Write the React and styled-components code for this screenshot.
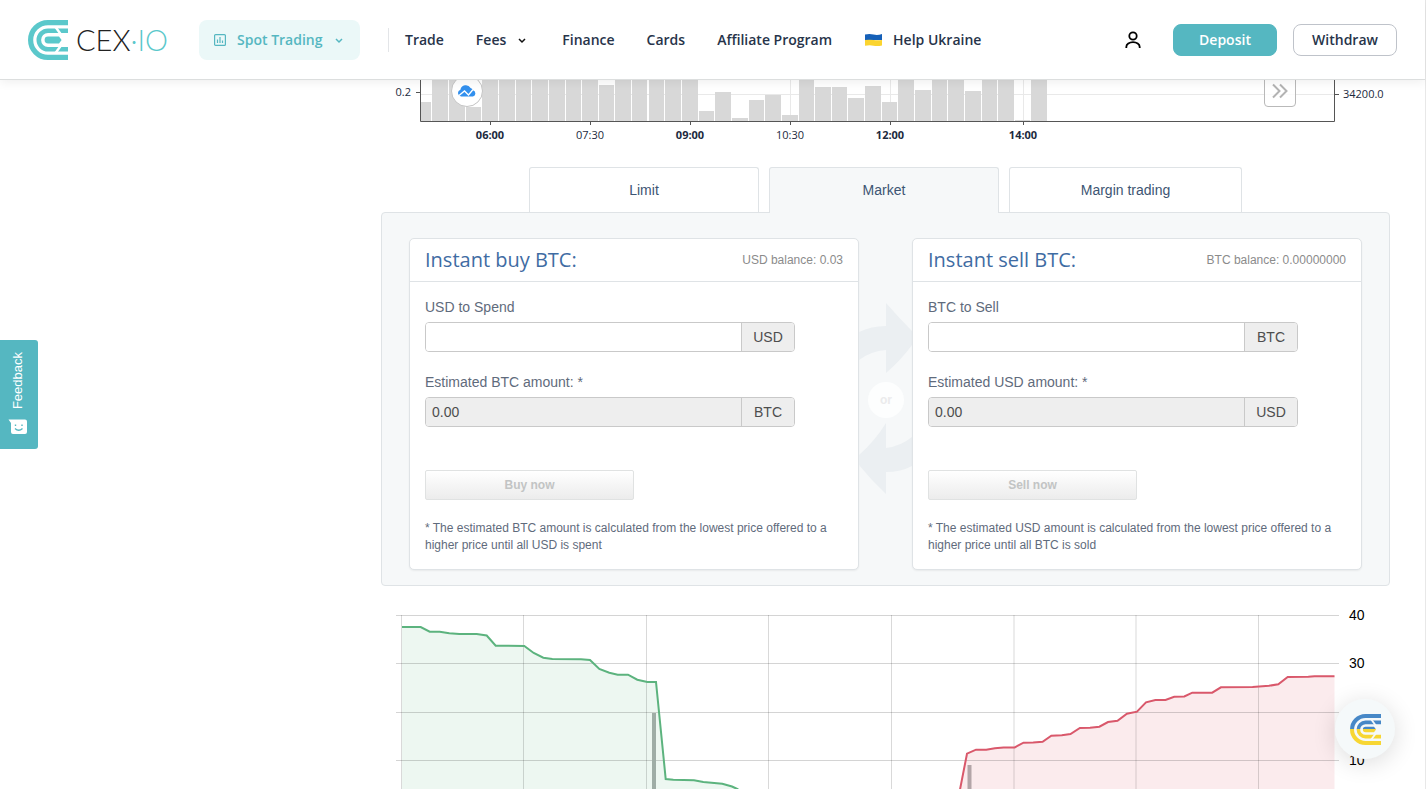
import React from "react";
import styled, { createGlobalStyle } from "styled-components";

const GlobalStyle = createGlobalStyle`
  *, *::before, *::after { box-sizing: border-box; }
  body {
    margin: 0;
    background: #fff;
    color: #5f6b7c;
    font-family: "Liberation Sans", Helvetica, Arial, sans-serif;
    font-size: 14px;
  }
  a { color: inherit; text-decoration: none; }
  button, input { font: inherit; margin: 0; }
`;

const Page = styled.div`
  border-right: 1px solid #e8e8e8;
`;

/* ---------- header ---------- */

const Header = styled.header`
  position: sticky;
  top: 0;
  z-index: 5;
  display: flex;
  align-items: center;
  height: 80px;
  padding: 0 28px;
  background: #fff;
  border-bottom: 1px solid #dcdede;
  box-shadow: 0 2px 10px rgba(0, 0, 0, 0.07);
  font: 600 14px/20px "Open Sans", "Noto Sans", sans-serif;
  color: #27344a;
`;

const Logo = styled.a`
  display: flex;
  align-items: center;
  width: 140px;
  margin-right: 31px;

  svg { flex: none; }
`;

const Wordmark = styled.svg`
  margin-left: 8px;
`;

const ProductButton = styled.button`
  display: flex;
  align-items: center;
  width: 161px;
  height: 40px;
  padding: 0 13px 0 14px;
  border: 0;
  border-radius: 8px;
  background: #ebf8f8;
  color: #55b7c1;
  cursor: pointer;

  span { margin: 0 auto 0 10px; }
`;

const Nav = styled.nav`
  display: flex;
  align-items: center;
  gap: 32px;
  margin-left: 28px;
  white-space: nowrap;
`;

const Divider = styled.span`
  width: 1px;
  height: 24px;
  margin-right: -16px;
  background: #e3e5e8;
`;

const NavLink = styled.a`
  display: flex;
  align-items: center;
  gap: ${(p) => p.$gap || 8}px;
`;

const Actions = styled.div`
  display: flex;
  align-items: center;
  gap: 16px;
  margin-left: auto;
`;

const IconButton = styled.button`
  display: grid;
  place-items: center;
  width: 24px;
  height: 24px;
  margin-right: 12px;
  padding: 0;
  border: 0;
  background: none;
`;

const ActionButton = styled.button`
  width: 104px;
  height: 32px;
  padding: 0;
  border: 1px solid ${(p) => (p.$primary ? "#55b7c1" : "#bfc3ca")};
  border-radius: 8px;
  background: ${(p) => (p.$primary ? "#55b7c1" : "#fff")};
  color: ${(p) => (p.$primary ? "#fff" : "#27344a")};
  cursor: pointer;
`;

/* ---------- body ---------- */

const Body = styled.div`
  display: grid;
  grid-template-columns: 381px minmax(0, 1fr);
  padding-right: 35px;
`;

const Main = styled.main`
  grid-column: 2;
`;

const ChartBox = styled.section`
  position: relative;
  overflow: hidden;
`;

const ChartSvg = styled.svg`
  display: block;
  width: 100%;
  font-family: ${(p) => p.$font};
  font-size: ${(p) => p.$size}px;
`;

const ChartBadge = styled.a`
  position: absolute;
  top: -5px;
  left: 70px;
  display: grid;
  place-items: center;
  width: 32px;
  height: 32px;
  border: 1px solid #c4c4c4;
  border-radius: 50%;
  background: #fff;
`;

const ScrollButton = styled.button`
  position: absolute;
  top: -5px;
  right: 94px;
  display: grid;
  place-items: center;
  width: 32px;
  height: 32px;
  padding: 0;
  border: 1px solid #b9b9b9;
  border-radius: 4px;
  background: rgba(255, 255, 255, 0.8);
`;

const Tabs = styled.div`
  display: flex;
  justify-content: center;
  gap: 10px;
`;

const Tab = styled.button`
  width: ${(p) => p.$width || 230}px;
  height: ${(p) => (p.$active ? 46 : 45)}px;
  margin-bottom: ${(p) => (p.$active ? -1 : 0)}px;
  padding: 0 0 ${(p) => (p.$active ? 1 : 0)}px;
  border: 1px solid #dfe3e6;
  border-bottom: 0;
  border-radius: 3px 3px 0 0;
  background: ${(p) => (p.$active ? "#f6f8f9" : "#fff")};
  color: #3d5573;
  position: relative;
  cursor: pointer;
`;

const Panel = styled.section`
  display: flex;
  padding: 25px 27px 15px;
  border: 1px solid #dfe3e6;
  border-radius: 4px;
  background: #f6f8f9;
`;

const Card = styled.form`
  flex: 1;
  border: 1px solid #dfe3e6;
  border-radius: 5px;
  background: #fff;
  box-shadow: 0 1px 2px rgba(0, 0, 0, 0.06);
`;

const CardHead = styled.header`
  display: flex;
  align-items: center;
  justify-content: space-between;
  height: 43px;
  padding: 0 15px;
  border-bottom: 1px solid #dfe3e6;
`;

const CardTitle = styled.h2`
  margin: 0;
  font: 400 20px/28px "Open Sans", "Noto Sans", sans-serif;
  color: #3f6ca3;
`;

const Balance = styled.span`
  font-size: 12px;
  color: #8b8b8b;
`;

const CardBody = styled.div`
  padding: 15px;
`;

const Field = styled.div`
  margin-bottom: 20px;

  label {
    display: block;
    margin-bottom: 5px;
    line-height: 20px;
  }
`;

const InputGroup = styled.div`
  display: flex;
  width: 370px;
  max-width: 100%;
  height: 30px;
  border: 1px solid #c9c9c9;
  border-radius: 4px;
  overflow: hidden;
  color: #4d4d4d;
`;

const Input = styled.input`
  flex: 1;
  min-width: 0;
  padding: 0 6px;
  border: 0;
  background: ${(p) => (p.readOnly ? "#eee" : "#fff")};
  color: inherit;
`;

const Unit = styled.span`
  width: 53px;
  border-left: 1px solid #c9c9c9;
  background: #eee;
  line-height: 28px;
  text-align: center;
`;

const SubmitButton = styled.button`
  display: block;
  width: 209px;
  height: 30px;
  margin-top: 43px;
  padding: 0;
  border: 1px solid #e0e2e2;
  border-radius: 2px;
  background: linear-gradient(#fff, #ececec);
  color: #c2c4c4;
  font-size: 12px;
  font-weight: 700;
`;

const Note = styled.p`
  margin: 20px 0 0;
  font-size: 12px;
  line-height: 17px;
`;

const Between = styled.svg`
  flex: none;
  width: 53px;
  height: 332px;
`;

/* ---------- floating widgets ---------- */

const Feedback = styled.button`
  position: fixed;
  left: 0;
  top: 340px;
  z-index: 6;
  display: flex;
  flex-direction: column;
  align-items: center;
  justify-content: space-between;
  width: 38px;
  height: 109px;
  padding: 12px 3px 14px 0;
  border: 0;
  border-radius: 0 3px 3px 0;
  background: #55b7c1;
  color: #fff;
  font-size: 13px;
  line-height: 16px;

  span { writing-mode: vertical-rl; transform: rotate(180deg); }
`;

const ChatButton = styled.button`
  position: fixed;
  right: 31px;
  bottom: 30px;
  z-index: 6;
  display: grid;
  place-items: center;
  width: 60px;
  height: 60px;
  padding: 0;
  border: 0;
  border-radius: 50%;
  background: #f5f9fa;
  box-shadow: 0 4px 24px rgba(0, 0, 0, 0.14);
`;

/* ---------- drawings ---------- */

const Chevron = ({ color }) => (
  <svg width="16" height="16" viewBox="0 0 16 16" fill="none" stroke={color} strokeWidth="1.5">
    <path d="M5 7l3 3 3-3" />
  </svg>
);

const Mark = ({ size, paint, back }) => (
  <svg width={size} height={size} viewBox="0 0 40 40" fill="none" aria-hidden="true">
    <defs>
      <linearGradient id="duo" gradientUnits="userSpaceOnUse" x1="0" y1="0" x2="0" y2="40">
        <stop offset="0.5" stopColor="#4788c7" />
        <stop offset="0.5" stopColor="#f7d633" />
      </linearGradient>
    </defs>
    <path d="M40 2.6H20a17.4 17.4 0 0 0 0 34.800h20" stroke={paint} strokeWidth="5.200" />
    <path d="M40 10.800H20a9.200 9.200 0 0 0 0 18.400h20" stroke={paint} strokeWidth="4.600" />
    <path d="M31 16.600H20a3.400 3.400 0 0 0 0 6.800h11l2.600-3.400z" fill={paint} />
    <path d="M27.500 7l9.500 13-9.500 13" stroke={back} strokeWidth="2.400" />
  </svg>
);

const Flag = () => (
  <svg width="19" height="14" viewBox="0 0 19 14">
    <path d="M1 1.500q4.500-1 8.500 0t8.500-.5V7H1z" fill="#1560b8" />
    <path d="M1 7q4.500-.6 8.500 0t8.500 0v5.500q-4.500 1-8.500.2T1 12.800z" fill="#fbd42f" />
  </svg>
);

const BARS = [
  [421, 10, 102], [432, 16, 70], [449, 16, 70], [466, 15, 107], [482, 16, 70], [499, 16, 70],
  [516, 15, 70], [532, 16, 70], [549, 16, 70], [566, 15, 70], [582, 16, 70], [599, 15, 85],
  [615, 16, 70], [632, 15, 70], [649, 15, 70], [665, 16, 70], [682, 16, 70], [699, 15, 111],
  [715, 16, 92], [732, 16, 118], [749, 15, 100], [765, 16, 95], [782, 16, 115], [799, 15, 70],
  [815, 16, 87], [832, 15, 87], [848, 16, 98], [865, 16, 86], [882, 15, 102], [898, 16, 70],
  [915, 16, 90], [932, 15, 70], [948, 16, 70], [965, 16, 91], [982, 15, 70], [998, 16, 70],
  [1015, 15, 120], [1031, 16, 70],
];

const TIMES = [
  [490, "06:00", 700], [590, "07:30", 400], [690, "09:00", 700],
  [790, "10:30", 400], [890, "12:00", 700], [1023, "14:00", 700],
];

const BIDS =
  "402,627 420.7,627 429.7,631.7 439.7,631.7 449.3,633.2 459.3,634 476.7,634 486.7,635.5 495.7,645.7 524.3,646 533.7,653 543.3,657.7 552.3,658.9 581,659.2 590,660 599.3,669 609.3,672.7 617.7,674.7 628,674.7 637.3,679.7 647.3,682 656,682 665.7,779 673.3,779.8 694,780.3 703.3,782 722.3,783.7 732,786.5 738.3,789.5";

const ASKS =
  "960,789.5 967,753.7 976,749.7 986.2,749.7 994.9,748.2 1003.6,747.4 1014.7,747.4 1023.5,742.7 1033.2,742.5 1042.6,741.7 1051.3,735.7 1061.8,735.2 1070.5,734 1079.9,728 1090,727.7 1099.4,726.7 1108,722 1117.5,720.7 1126.9,713.7 1137,711.7 1146,702.3 1155.4,700 1165.5,700 1174.2,696.8 1184.3,696.5 1192.3,692.7 1212.2,692.7 1220.9,687.3 1252.6,687 1269,685.8 1278.3,684.2 1287.7,677 1308.3,676.8 1314.5,676.3 1334.5,676.3";

const PriceChart = () => (
  <ChartBox>
    <ChartSvg viewBox="381 80 1009 87" $font='"Open Sans", "Noto Sans", sans-serif' $size={11}>
      <path d="M421 94.500H1334M490.500 80V121M590.500 80V121M690.500 80V121M790.500 80V121M890.500 80V121M1023.500 80V121" stroke="#e9e9e9" />
      {BARS.map(([x, w, y]) => (
        <rect key={x} x={x} y={y} width={w} height={121 - y} fill="#d8d8d8" />
      ))}
      <path d="M420.500 80V121.500H1334.500V80M416 92.500h4M1335 94.500h4" fill="none" stroke="#555" />
      {TIMES.map(([x]) => (
        <path key={x} d={`M${x + 0.5} 122v3`} stroke="#555" />
      ))}
      <g fill="#1c2a40">
        {TIMES.map(([x, t, w]) => (
          <text key={t} x={x} y="139" textAnchor="middle" fontWeight={w}>{t}</text>
        ))}
        <text x="411" y="96" textAnchor="end">0.2</text>
        <text x="1343" y="98">34200.0</text>
      </g>
    </ChartSvg>
    <ChartBadge href="#" aria-label="Charts">
      <svg width="20" height="12" viewBox="0 0 20 12">
        <path d="M4 11.500a3.500 3.500 0 0 1-.6-6.800A5.500 5.500 0 0 1 13.600 3a4.300 4.300 0 0 1 2.800 2.600A3.100 3.100 0 0 1 16 11.500z" fill="#3290ee" />
        <path d="M2 10.500l5.500-4.500 4 4L16 4.500" fill="none" stroke="#fff" strokeWidth="1.300" />
      </svg>
    </ChartBadge>
    <ScrollButton type="button" aria-label="Scroll to latest">
      <svg width="18" height="16" viewBox="0 0 18 16" fill="none" stroke="#b3b3b3" strokeWidth="2">
        <path d="M2 1.500l6.500 6.500L2 14.500M9 1.500l6.500 6.500L9 14.500" />
      </svg>
    </ScrollButton>
  </ChartBox>
);

const DepthChart = () => (
  <ChartBox>
    <ChartSvg viewBox="381 586 1009 203" $font='"Liberation Sans", Arial, sans-serif' $size={14}>
      <polygon points={`402,790 ${BIDS} 738,790`} fill="#edf7f1" />
      <polygon points={`960,790 ${ASKS} 1334.500,790`} fill="#fbebed" />
      <path d="M396 615.500H1339M396 663.500H1339M396 712.500H1339M396 760.500H1339" stroke="#000" strokeOpacity="0.17" />
      <path d="M401.500 615V789M523.500 615V789M646.500 615V789M768.500 615V789M891.500 615V789M1014 615V789M1136 615V789M1258.500 615V789" stroke="#000" strokeOpacity="0.15" />
      <rect x="652" y="713" width="4" height="77" fill="#9fada6" />
      <rect x="967.500" y="765" width="4" height="25" fill="#b3a5a8" />
      <polyline points={BIDS} fill="none" stroke="#5cb37e" strokeWidth="2" />
      <polyline points={ASKS} fill="none" stroke="#d9586b" strokeWidth="2" />
      <g fill="#000">
        <text x="1349" y="620">40</text>
        <text x="1349" y="668">30</text>
        <text x="1349" y="717">20</text>
        <text x="1349" y="765">10</text>
      </g>
    </ChartSvg>
  </ChartBox>
);

const TradeCard = ({ side, title, balance, pay, get, payLabel, note }) => (
  <Card onSubmit={(e) => e.preventDefault()}>
    <CardHead>
      <CardTitle>{title}</CardTitle>
      <Balance>{balance}</Balance>
    </CardHead>
    <CardBody>
      <Field>
        <label htmlFor={`${side}-amount`}>{payLabel}</label>
        <InputGroup>
          <Input id={`${side}-amount`} />
          <Unit>{pay}</Unit>
        </InputGroup>
      </Field>
      <Field>
        <label htmlFor={`${side}-estimate`}>Estimated {get} amount: *</label>
        <InputGroup>
          <Input id={`${side}-estimate`} readOnly value="0.00" />
          <Unit>{get}</Unit>
        </InputGroup>
      </Field>
      <SubmitButton disabled>{side === "buy" ? "Buy now" : "Sell now"}</SubmitButton>
      <Note>{note}</Note>
    </CardBody>
  </Card>
);

export default function App() {
  return (
    <Page>
      <GlobalStyle />
      <Header>
        <Logo href="#" aria-label="CEX.IO">
          <Mark size={40} paint="#5bc8cb" back="#fff" />
          <Wordmark width="92" height="40" viewBox="0 0 92 40" fontFamily="Lato, sans-serif" fontSize="29" fontWeight="300">
            <text x="0" y="31" fill="#222">CEX<tspan fill="#5bc8cb">·IO</tspan></text>
          </Wordmark>
        </Logo>
        <ProductButton type="button">
          <svg width="14" height="14" viewBox="0 0 14 14" fill="none" stroke="#55b7c1" strokeWidth="1.200">
            <rect x="1.600" y="1.600" width="10.800" height="10.800" rx="1" />
            <path d="M4.500 10V6.500M7 10V4M9.500 10V7.500" />
          </svg>
          <span>Spot Trading</span>
          <Chevron color="#55b7c1" />
        </ProductButton>
        <Nav>
          <Divider />
          <NavLink href="#">Trade</NavLink>
          <NavLink href="#">Fees <Chevron color="#111" /></NavLink>
          <NavLink href="#">Finance</NavLink>
          <NavLink href="#">Cards</NavLink>
          <NavLink href="#">Affiliate Program</NavLink>
          <NavLink href="#" $gap={10}><Flag /> Help Ukraine</NavLink>
        </Nav>
        <Actions>
          <IconButton type="button" aria-label="Account">
            <svg width="24" height="24" viewBox="0 0 24 24" fill="none" stroke="#000" strokeWidth="1.800">
              <circle cx="12" cy="8" r="3.700" />
              <path d="M5.300 20v-1a6.700 4.800 0 0 1 13.400 0v1" />
            </svg>
          </IconButton>
          <ActionButton type="button" $primary>Deposit</ActionButton>
          <ActionButton type="button">Withdraw</ActionButton>
        </Actions>
      </Header>
      <Body>
        <Main>
          <PriceChart />
          <Tabs role="tablist">
            <Tab type="button" role="tab" aria-selected="false">Limit</Tab>
            <Tab type="button" role="tab" aria-selected="true" $active>Market</Tab>
            <Tab type="button" role="tab" aria-selected="false" $width={233}>Margin trading</Tab>
          </Tabs>
          <Panel>
            <TradeCard
              side="buy"
              title="Instant buy BTC:"
              balance="USD balance: 0.03"
              pay="USD"
              get="BTC"
              payLabel="USD to Spend"
              note="* The estimated BTC amount is calculated from the lowest price offered to a higher price until all USD is spent"
            />
            <Between viewBox="0 0 53 332">
              <g fill="#ebeff2">
                <path d="M0 94Q12 88 27 88V65Q40 80 53 93V107Q42 122 27 135V112Q12 113 0 122z" />
                <path d="M53 199Q42 208 27 210V185Q16 203 0 217V227Q13 243 27 256V234Q42 234 53 228z" />
              </g>
              <circle cx="27" cy="162" r="18" fill="#fdfefe" />
              <text x="27" y="166" textAnchor="middle" fontSize="12" fontWeight="700" fill="#ebebec">or</text>
            </Between>
            <TradeCard
              side="sell"
              title="Instant sell BTC:"
              balance="BTC balance: 0.00000000"
              pay="BTC"
              get="USD"
              payLabel="BTC to Sell"
              note="* The estimated USD amount is calculated from the lowest price offered to a higher price until all BTC is sold"
            />
          </Panel>
          <DepthChart />
        </Main>
      </Body>
      <Feedback type="button">
        <span>Feedback</span>
        <svg width="20" height="16" viewBox="0 0 20 16">
          <path d="M.5.500H17a2 2 0 0 1 2 2v10.500a2 2 0 0 1-2 2H5a2 2 0 0 1-2-2V4z" fill="#fff" />
          <path d="M7.500 5.500v1.500M14 5.500v1.500M7 9.500q3.700 3.500 7.500 0" fill="none" stroke="#55b7c1" strokeWidth="1.400" />
        </svg>
      </Feedback>
      <ChatButton type="button" aria-label="Chat">
        <Mark size={31} paint="url(#duo)" back="#f5f9fa" />
      </ChatButton>
    </Page>
  );
}
